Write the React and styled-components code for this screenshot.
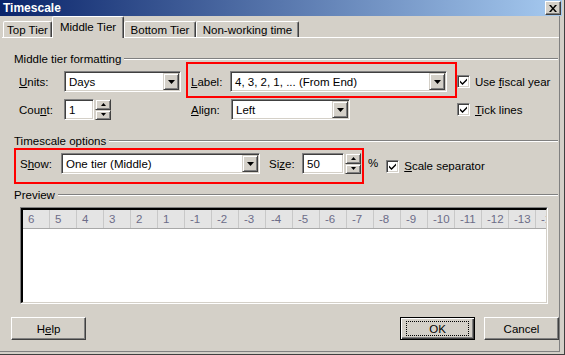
import React from "react";
import styled, { createGlobalStyle } from "styled-components";

const GlobalStyle = createGlobalStyle`
  html, body {
    margin: 0;
    padding: 0;
    background: #d4d0c8;
  }
  body {
    font-family: "Liberation Sans", Arial, sans-serif;
    font-size: 11.5px;
    color: #000;
  }
  * {
    box-sizing: border-box;
  }
`;

const rulerLabels = [6, 5, 4, 3, 2, 1, -1, -2, -3, -4, -5, -6, -7, -8, -9, -10, -11, -12, -13, -14];

export default function App() {
  return (
    <>
      <GlobalStyle />
      <Window>
        <TitleBar>
          <Title>Timescale</Title>
          <CloseButton>
            <svg width="8" height="7" viewBox="0 0 8 7">
              <path d="M0 0h2l2 2.5L6 0h2L5 3.5 8 7H6L4 4.5 2 7H0l3-3.5z" fill="#000" />
            </svg>
          </CloseButton>
        </TitleBar>
        <Client>
          <TabStrip>
            <Tab $w={49}>Top Tier</Tab>
            <Tab $w={72} $active>Middle Tier</Tab>
            <Tab $w={72}>Bottom Tier</Tab>
            <Tab $w={103}>Non-working time</Tab>
          </TabStrip>
          <Panel>
            <GroupHeader $mt={14}>Middle tier formatting</GroupHeader>
            <FieldGrid>
              <Field>
                <FieldLabel $w={45}>
                  <u>U</u>nits:
                </FieldLabel>
                <Select $w={117} value="Days" />
              </Field>
              <Highlight $row>
                <FieldLabel $w={39}>
                  <u>L</u>abel:
                </FieldLabel>
                <Select $w={217} value="4, 3, 2, 1, ... (From End)" />
              </Highlight>
              <Check>
                <CheckBox />
                <span>
                  Use <u>f</u>iscal year
                </span>
              </Check>
              <Field>
                <FieldLabel $w={45}>
                  Cou<u>n</u>t:
                </FieldLabel>
                <Input $w={30}>1</Input>
                <Spinner />
              </Field>
              <Field $indent={5}>
                <FieldLabel $w={40}>
                  <u>A</u>lign:
                </FieldLabel>
                <Select $w={119} value="Left" />
              </Field>
              <Check>
                <CheckBox />
                <span>
                  <u>T</u>ick lines
                </span>
              </Check>
            </FieldGrid>

            <GroupHeader $mt={14}>Timescale options</GroupHeader>
            <OptionsRow>
              <Highlight>
                <FieldLabel $w={41}>
                  S<u>h</u>ow:
                </FieldLabel>
                <Select $w={199} value="One tier (Middle)" />
                <FieldLabel $w={33} $ml={9}>
                  Si<u>z</u>e:
                </FieldLabel>
                <Input $w={42}>50</Input>
                <Spinner />
              </Highlight>
              <Percent>%</Percent>
              <Check $ml={8}>
                <CheckBox />
                <span>
                  <u>S</u>cale separator
                </span>
              </Check>
            </OptionsRow>

            <GroupHeader $mt={4}>Preview</GroupHeader>
            <Preview>
              <PreviewInner>
                <Ruler>
                  {rulerLabels.map((n) => (
                    <RulerCell key={n}>{n}</RulerCell>
                  ))}
                </Ruler>
              </PreviewInner>
            </Preview>
          </Panel>
          <ButtonRow>
            <Button>
              H<u>e</u>lp
            </Button>
            <Spacer />
            <Button $default>
              <FocusRing>OK</FocusRing>
            </Button>
            <Button>Cancel</Button>
          </ButtonRow>
        </Client>
      </Window>
    </>
  );
}

function Select({ $w, value }) {
  return (
    <SelectBox $w={$w}>
      <SelectText>{value}</SelectText>
      <DropButton>
        <svg width="7" height="4" viewBox="0 0 7 4">
          <path d="M0 0h7L3.5 4z" fill="#000" />
        </svg>
      </DropButton>
    </SelectBox>
  );
}

function Spinner() {
  return (
    <SpinBox>
      <SpinButton>
        <svg width="5" height="3" viewBox="0 0 5 3">
          <path d="M0 3h5L2.5 0z" fill="#000" />
        </svg>
      </SpinButton>
      <SpinButton>
        <svg width="5" height="3" viewBox="0 0 5 3">
          <path d="M0 0h5L2.5 3z" fill="#000" />
        </svg>
      </SpinButton>
    </SpinBox>
  );
}

function CheckBox() {
  return (
    <Box>
      <svg width="7" height="7" viewBox="0 0 7 7">
        <path d="M0 2.5l2.5 2.5L7 0.5V2.5L2.5 7L0 4.5z" fill="#000" />
      </svg>
    </Box>
  );
}

const Window = styled.div`
  width: 565px;
  height: 355px;
  display: flex;
  flex-direction: column;
  background: #d4d0c8;
  border-right: 1px solid #404040;
  border-bottom: 1px solid #404040;
  overflow: hidden;
`;

const TitleBar = styled.div`
  height: 16px;
  margin-right: 2px;
  padding: 0 1px 0 3px;
  display: flex;
  align-items: center;
  justify-content: space-between;
  background: linear-gradient(to right, #0a246a, #a6caf0);
`;

const Title = styled.div`
  color: #fff;
  font-weight: bold;
  font-size: 12px;
`;

const CloseButton = styled.div`
  width: 16px;
  height: 14px;
  display: flex;
  align-items: center;
  justify-content: center;
  background: #d4d0c8;
  border: 1px solid;
  border-color: #fff #404040 #404040 #fff;
  box-shadow: inset -1px -1px #808080;
`;

const Client = styled.div`
  flex: 1;
  display: flex;
  flex-direction: column;
  margin: 0 4px 2px 0;
  border-right: 1px solid #808080;
  border-bottom: 1px solid #808080;
`;

const TabStrip = styled.div`
  height: 21px;
  display: flex;
  align-items: flex-end;
  padding-left: 3px;
`;

const Tab = styled.div`
  position: relative;
  z-index: ${(p) => (p.$active ? 1 : 0)};
  width: ${(p) => p.$w}px;
  height: ${(p) => (p.$active ? 22 : 16)}px;
  margin-bottom: ${(p) => (p.$active ? -1 : 0)}px;
  padding-bottom: ${(p) => (p.$active ? 2 : 0)}px;
  display: flex;
  align-items: center;
  justify-content: center;
  background: #d4d0c8;
  border: 1px solid;
  border-bottom: none;
  border-color: #fff #404040 transparent #fff;
  border-radius: 2px 2px 0 0;
  box-shadow: inset -1px 0 #808080;
  white-space: nowrap;
`;

const Panel = styled.div`
  margin-left: 2px;
  border-top: 1px solid #fff;
  padding-left: 12px;
`;

const GroupHeader = styled.div`
  height: 13px;
  margin-top: ${(p) => p.$mt}px;
  margin-right: 1px;
  display: flex;
  align-items: center;
  gap: 3px;
  white-space: nowrap;

  &::after {
    content: "";
    flex: 1;
    border-top: 1px solid #808080;
    border-bottom: 1px solid #fff;
  }
`;

const FieldGrid = styled.div`
  display: grid;
  grid-template-columns: 167px 271px 1fr;
  grid-auto-rows: 21px;
  row-gap: 7px;
  margin-top: 6px;
  padding-left: 5px;
`;

const Field = styled.div`
  display: flex;
  align-items: center;
  padding-left: ${(p) => p.$indent || 0}px;
`;

const FieldLabel = styled.div`
  width: ${(p) => p.$w}px;
  margin-left: ${(p) => p.$ml || 0}px;
  flex: none;
  white-space: nowrap;
`;

const Highlight = styled.div`
  display: flex;
  align-items: center;
  align-self: start;
  border: 2px solid #ff0000;
  padding: ${(p) => (p.$row ? "7px 4px 4px 3px" : "3px 1px 8px 4px")};
  margin: ${(p) => (p.$row ? "-9px 0 -6px" : "0")};
`;

const SelectBox = styled.div`
  width: ${(p) => p.$w}px;
  height: 21px;
  flex: none;
  display: flex;
  align-items: stretch;
  padding: 1px;
  background: #fff;
  border: 1px solid;
  border-color: #808080 #fff #fff #808080;
  box-shadow: inset 1px 1px #404040, inset -1px -1px #d4d0c8;
`;

const SelectText = styled.div`
  flex: 1;
  display: flex;
  align-items: center;
  padding-left: 3px;
  white-space: nowrap;
  overflow: hidden;
`;

const raised = `
  background: #d4d0c8;
  border: 1px solid;
  border-color: #d4d0c8 #404040 #404040 #d4d0c8;
  box-shadow: inset 1px 1px #fff, inset -1px -1px #808080;
`;

const DropButton = styled.div`
  width: 16px;
  flex: none;
  display: flex;
  align-items: center;
  justify-content: center;
  ${raised}
`;

const Input = styled.div`
  width: ${(p) => p.$w}px;
  height: 21px;
  flex: none;
  display: flex;
  align-items: center;
  padding-left: 4px;
  background: #fff;
  border: 1px solid;
  border-color: #808080 #fff #fff #808080;
  box-shadow: inset 1px 1px #404040, inset -1px -1px #d4d0c8;
`;

const SpinBox = styled.div`
  width: 16px;
  height: 21px;
  margin-left: 1px;
  flex: none;
  display: flex;
  flex-direction: column;
`;

const SpinButton = styled.div`
  flex: 1;
  display: flex;
  align-items: center;
  justify-content: center;
  ${raised}
`;

const Check = styled.div`
  display: flex;
  align-items: center;
  gap: 5px;
  margin-left: ${(p) => p.$ml || 0}px;
  white-space: nowrap;
`;

const Box = styled.div`
  width: 13px;
  height: 13px;
  flex: none;
  display: flex;
  align-items: center;
  justify-content: center;
  background: #fff;
  border: 1px solid;
  border-color: #808080 #fff #fff #808080;
  box-shadow: inset 1px 1px #404040, inset -1px -1px #d4d0c8;
`;

const OptionsRow = styled.div`
  display: flex;
  align-items: center;
  margin-top: 1px;
`;

const Percent = styled.div`
  margin-left: 4px;
  padding-bottom: 6px;
`;

const Preview = styled.div`
  width: 528px;
  height: 97px;
  margin: 6px 0 0 6px;
  border: 1px solid;
  border-color: #808080 #fff #fff #808080;
`;

const PreviewInner = styled.div`
  height: 100%;
  background: #fff;
  border-style: solid;
  border-width: 2px 1px 1px 2px;
  border-color: #000 #d4d0c8 #d4d0c8 #000;
  overflow: hidden;
`;

const Ruler = styled.div`
  height: 19px;
  display: flex;
  background: #e4e4e4;
  border-bottom: 1px solid #a8a8a8;
`;

const RulerCell = styled.div`
  width: 27px;
  flex: none;
  padding-left: 5px;
  display: flex;
  align-items: center;
  color: #6c6c88;
  border-right: 1px solid #c8c8c8;
`;

const ButtonRow = styled.div`
  display: flex;
  gap: 9px;
  margin-top: 13px;
  padding: 0 0 0 11px;
`;

const Spacer = styled.div`
  flex: 1;
`;

const Button = styled.button`
  width: 75px;
  height: 23px;
  padding: 0;
  font: inherit;
  color: #000;
  display: flex;
  align-items: center;
  justify-content: center;
  background: #d4d0c8;
  border: 1px solid;
  border-color: ${(p) => (p.$default ? "#000" : "#fff #404040 #404040 #fff")};
  box-shadow: ${(p) =>
    p.$default
      ? "inset 1px 1px #fff, inset -1px -1px #404040, inset -2px -2px #808080"
      : "inset -1px -1px #808080"};
`;

const FocusRing = styled.span`
  width: 63px;
  height: 15px;
  display: flex;
  align-items: center;
  justify-content: center;
  border: 1px dotted #000;
`;
